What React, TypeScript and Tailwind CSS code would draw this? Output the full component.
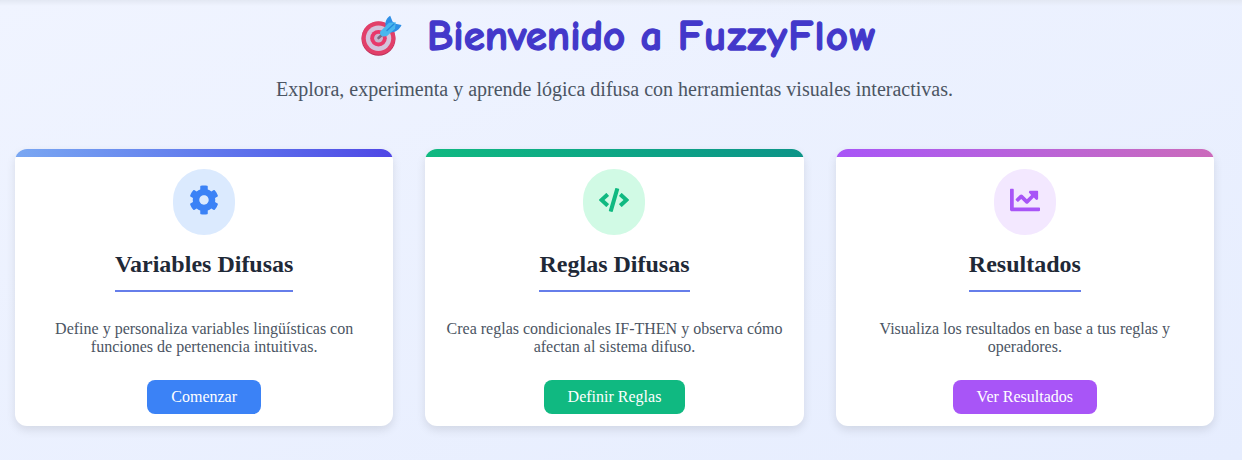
import type { IconType } from "react-icons";
import { FaChartLine, FaCode, FaCog } from "react-icons/fa";

type Card = {
  title: string;
  text: string;
  action: string;
  Icon: IconType;
  bar: string;
  badge: string;
  button: string;
};

const cards: Card[] = [
  {
    title: "Variables Difusas",
    text: "Define y personaliza variables lingüísticas con funciones de pertenencia intuitivas.",
    action: "Comenzar",
    Icon: FaCog,
    bar: "from-[#7aa7f2] to-[#4f46e5]",
    badge: "bg-[#dbeafe] text-[#3b82f6]",
    button: "bg-[#3b82f6]",
  },
  {
    title: "Reglas Difusas",
    text: "Crea reglas condicionales IF-THEN y observa cómo afectan al sistema difuso.",
    action: "Definir Reglas",
    Icon: FaCode,
    bar: "from-[#10b981] to-[#0d9488]",
    badge: "bg-[#d1fae5] text-[#10b981]",
    button: "bg-[#10b981]",
  },
  {
    title: "Resultados",
    text: "Visualiza los resultados en base a tus reglas y operadores.",
    action: "Ver Resultados",
    Icon: FaChartLine,
    bar: "from-[#a855f7] to-[#cb6abb]",
    badge: "bg-[#f3e8ff] text-[#a855f7]",
    button: "bg-[#a855f7]",
  },
];

function Target() {
  return (
    <svg viewBox="0 0 42 42" className="mb-[2px] h-[42px] w-[42px] shrink-0" aria-hidden="true">
      <circle cx="17.5" cy="23.7" r="17" fill="#b92f58" />
      <circle cx="17.5" cy="23" r="16.8" fill="#e23f69" />
      <circle cx="17.5" cy="23.2" r="12.7" fill="#d3c3dc" />
      <circle cx="17.5" cy="23.2" r="8.3" fill="#e8386a" />
      <circle cx="17.5" cy="23.2" r="4.4" fill="#c9b4cd" />
      <path d="M17.5 23 L23 18" stroke="#7b6880" strokeWidth="2.6" strokeLinecap="round" />
      <path d="M24.5 10.5 C24 6 26 3 29.2 0.8 L31.5 6.5 L34.5 8.8 L40.5 10 C39 14 34.5 17.5 29.5 17.5 Z" fill="#2f8fe6" />
      <path d="M19.3 16.5 L28 7.8 L34.8 7.2 L34 13.8 L26.3 20.8 C22 23 18 20.5 19.3 16.5 Z" fill="#49b7ee" />
      <path d="M26 15.5 L33 9" stroke="#2689dd" strokeWidth="1.4" strokeLinecap="round" />
    </svg>
  );
}

export default function App() {
  return (
    <main className="h-[460px] overflow-hidden bg-linear-to-br from-[#f0f4ff] to-[#e6edfe] font-['Liberation_Serif','Times_New_Roman',serif]">
      <div className="h-[6px] bg-linear-to-b from-[#e3e8f3] to-transparent" />
      <header className="flex h-[143px] flex-col">
        <h1 className="flex h-[62px] items-center pl-[361px] font-['Comic_Sans_MS','Comic_Neue',Inter,sans-serif] text-[43px] leading-[60px] font-bold text-[#4338ca]">
          <Target />
          <span className="mb-[3px] ml-[24px] whitespace-pre [-webkit-text-stroke:1.3px_#4338ca]">
            Bienvenido a <span className="tracking-[1.3px]">FuzzyFlow</span>
          </span>
        </h1>
        <p className="mr-[13px] pt-[10px] text-center text-[20px] leading-[23px] text-[#4b5563]">
          Explora, experimenta y aprende lógica difusa con herramientas visuales interactivas.
        </p>
      </header>
      <section className="mr-[28px] ml-[15px] grid grid-cols-3 gap-8">
        {cards.map(({ title, text, action, Icon, bar, badge, button }) => (
          <article
            key={title}
            className="flex h-[277px] flex-col items-center overflow-hidden rounded-xl bg-white shadow-[0_4px_10px_rgba(0,0,0,0.1)]"
          >
            <div className={`h-2 w-full shrink-0 bg-linear-to-r ${bar}`} />
            <div className={`mt-3 h-[66px] w-[62px] shrink-0 rounded-full p-4 ${badge}`}>
              <Icon className="h-[30px] w-[30px]" />
            </div>
            <h2 className="mt-[15px] h-[42px] border-b-2 border-[#667eea] text-[24px] leading-[28px] font-bold text-[#1f2937]">
              {title}
            </h2>
            <p className="mt-7 h-[36px] px-5 text-center text-[16px] leading-[18px] text-[#4b5563]">{text}</p>
            <button className={`mt-[24px] h-[34px] shrink-0 rounded-lg px-6 text-[16px] leading-[18px] text-white ${button}`}>
              {action}
            </button>
          </article>
        ))}
      </section>
    </main>
  );
}
